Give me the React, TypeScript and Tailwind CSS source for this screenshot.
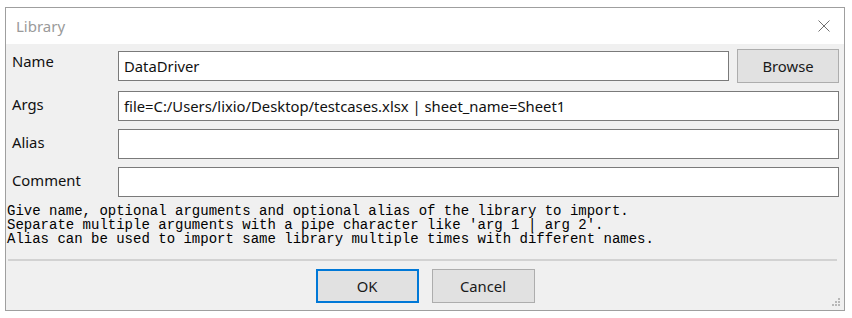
import React from "react";

const sans = { fontFamily: '"Noto Sans", "Open Sans", sans-serif' };

function Field({ value }: { value?: string }) {
  return (
    <div className="flex-1 h-[30px] bg-white border border-[#7a7a7a] flex items-center px-[5px] text-[14.8px] text-[#111] whitespace-nowrap overflow-hidden">
      {value}
    </div>
  );
}

function Label({ text, first }: { text: string; first?: boolean }) {
  return (
    <div className={`w-[106px] shrink-0 self-start leading-[20px] text-[14.8px] text-[#111] ${first ? "pt-[2px]" : "pt-[3px]"}`}>
      {text}
    </div>
  );
}

export default function App() {
  return (
    <div className="w-[852px] h-[318px] bg-white pt-[7px] pl-[5px]" style={sans}>
      <div className="relative w-[840px] h-[304px] border border-[#9f9f9f] bg-[#f0f0f0] flex flex-col">
        <div className="h-[36px] bg-white flex items-center justify-between pl-[10px] pr-[14px] shrink-0">
          <span className="text-[15px] text-[#9a9a9a]">Library</span>
          <svg width="12" height="12" viewBox="0 0 12 12">
            <path d="M0.5 0.5 L11.5 11.5 M11.5 0.5 L0.5 11.5" stroke="#707070" strokeWidth="1" fill="none" />
          </svg>
        </div>
        <div className="flex-1 flex flex-col pt-[5px] pl-[6px] pr-[5px]">
          <div className="flex flex-col gap-[8px]">
            <div className="flex items-center h-[34px]">
              <Label text="Name" first />
              <Field value="DataDriver" />
              <div className="ml-[8px] w-[102px] h-[34px] bg-[#e1e1e1] border border-[#adadad] flex items-center justify-center text-[14.8px] text-[#1a1a1a]">
                Browse
              </div>
            </div>
            <div className="flex items-center">
              <Label text="Args" />
              <Field value="file=C:/Users/lixio/Desktop/testcases.xlsx | sheet_name=Sheet1" />
            </div>
            <div className="flex items-center">
              <Label text="Alias" />
              <Field />
            </div>
            <div className="flex items-center">
              <Label text="Comment" />
              <Field />
            </div>
          </div>
          <div
            className="mt-[7px] -ml-[5px] text-[14px] leading-[14px] text-black whitespace-pre"
            style={{ fontFamily: '"Liberation Mono", "DejaVu Sans Mono", monospace' }}
          >
            {"Give name, optional arguments and optional alias of the library to import.\nSeparate multiple arguments with a pipe character like 'arg 1 | arg 2'.\nAlias can be used to import same library multiple times with different names."}
          </div>
          <div className="mt-[13px] h-[2px] bg-[#d2d2d2] -ml-[4px] mr-[2px]" />
          <div className="mt-[8px] flex justify-center gap-[13px] -ml-[6px] -mr-[5px]">
            <div className="w-[103px] h-[34px] bg-[#e1e1e1] border-2 border-[#0078d7] flex items-center justify-center text-[14.8px] text-[#1a1a1a]">
              OK
            </div>
            <div className="w-[103px] h-[34px] bg-[#e1e1e1] border border-[#adadad] flex items-center justify-center text-[14.8px] text-[#1a1a1a]">
              Cancel
            </div>
          </div>
        </div>
        <svg className="absolute right-[3px] bottom-[3px]" width="9" height="9" viewBox="0 0 9 9">
          <rect x="6" y="0" width="2" height="2" fill="#b8b8b8" />
          <rect x="3" y="3" width="2" height="2" fill="#b8b8b8" />
          <rect x="6" y="3" width="2" height="2" fill="#b8b8b8" />
          <rect x="0" y="6" width="2" height="2" fill="#b8b8b8" />
          <rect x="3" y="6" width="2" height="2" fill="#b8b8b8" />
          <rect x="6" y="6" width="2" height="2" fill="#b8b8b8" />
        </svg>
      </div>
    </div>
  );
}
